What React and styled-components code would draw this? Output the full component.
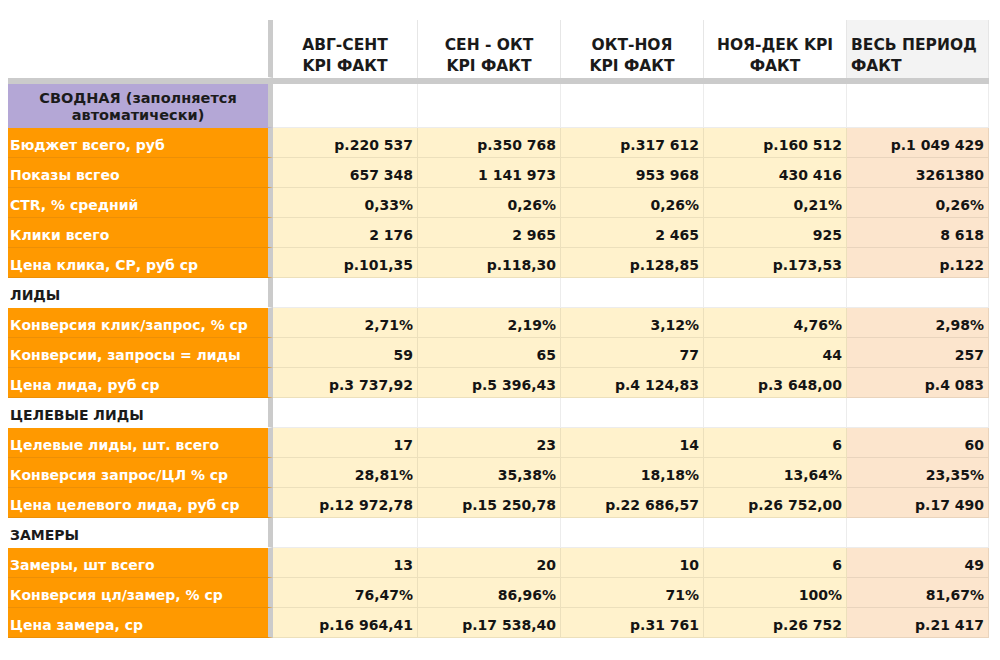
import React from 'react';
import styled, { createGlobalStyle } from 'styled-components';

const Global = createGlobalStyle`
  html, body { margin: 0; padding: 0; background: #ffffff; }
  body { font-family: "DejaVu Sans", "Liberation Sans", sans-serif; }
  * { box-sizing: border-box; }
`;

const Page = styled.div`
  padding: 20px 0 0 8px;
  width: 1000px;
  height: 660px;
  overflow: hidden;
`;

const Sheet = styled.div`
  display: flex;
  flex-direction: column;
  width: 981px;
`;

const Row = styled.div`
  display: grid;
  grid-template-columns: 265px 145px 143px 143px 143px 142px;
  height: ${p => p.$h}px;
  border-bottom: ${p => p.$rule ? '6px solid #cbcbcb' : 'none'};
`;

const LabelCell = styled.div`
  display: flex;
  align-items: center;
  justify-content: ${p => (p.$kind === 'title' ? 'center' : 'flex-start')};
  text-align: ${p => (p.$kind === 'title' ? 'center' : 'left')};
  padding: ${p => (p.$kind === 'title' ? '3px 10px 0' : '5px 2px 0')};
  border-right: 5px solid #cbcbcb;
  border-bottom: 1px solid ${p => p.$kind === 'metric' ? '#ec8f06' : 'transparent'};
  background: ${p =>
    p.$kind === 'metric' ? '#ff9900' : p.$kind === 'title' ? '#b4a7d6' : '#ffffff'};
  color: ${p => (p.$kind === 'metric' ? '#ffffff' : '#1b1b1b')};
  font-weight: 700;
  font-size: ${p => (p.$kind === 'title' ? '14.5px' : '14px')};
  line-height: ${p => (p.$kind === 'title' ? '17px' : '18px')};
  white-space: pre-line;
`;

const HeadCell = styled.div`
  display: flex;
  align-items: flex-end;
  justify-content: ${p => (p.$left ? 'flex-start' : 'center')};
  text-align: ${p => (p.$left ? 'left' : 'center')};
  padding: 0 4px 1px;
  background: ${p => (p.$shade ? '#f3f3f3' : '#ffffff')};
  border-right: 1px solid #e6e6e6;
  color: #1a1a1a;
  font-weight: 700;
  font-size: 15.5px;
  line-height: 21px;
  white-space: pre-line;
`;

const BLANK = '#ffffff';
const YELLOW = '#fff2cc';
const PEACH = '#fce5cd';

const ValueCell = styled.div`
  display: flex;
  align-items: center;
  justify-content: flex-end;
  padding: 5px 4px 0 2px;
  background: ${p => p.$bg};
  border-right: 1px solid rgba(0, 0, 0, 0.075);
  border-bottom: 1px solid rgba(0, 0, 0, 0.075);
  color: #141414;
  font-weight: 700;
  font-size: 14px;
  line-height: 18px;
  white-space: nowrap;
`;

const headers = [
  { t: 'АВГ-СЕНТ\nKPI ФАКТ' },
  { t: 'СЕН - ОКТ\nKPI ФАКТ' },
  { t: 'ОКТ-НОЯ\nKPI ФАКТ' },
  { t: 'НОЯ-ДЕК KPI\nФАКТ' },
  { t: 'ВЕСЬ ПЕРИОД\nФАКТ', left: true, shade: true },
];

const rows = [
  { label: 'Бюджет всего, руб', v: ['р.220 537', 'р.350 768', 'р.317 612', 'р.160 512', 'р.1 049 429'] },
  { label: 'Показы всгео', v: ['657 348', '1 141 973', '953 968', '430 416', '3261380'] },
  { label: 'CTR, % средний', v: ['0,33%', '0,26%', '0,26%', '0,21%', '0,26%'] },
  { label: 'Клики всего', v: ['2 176', '2 965', '2 465', '925', '8 618'] },
  { label: 'Цена клика, СР, руб ср', v: ['р.101,35', 'р.118,30', 'р.128,85', 'р.173,53', 'р.122'] },
  { section: 'ЛИДЫ' },
  { label: 'Конверсия клик/запрос, % ср', v: ['2,71%', '2,19%', '3,12%', '4,76%', '2,98%'] },
  { label: 'Конверсии, запросы = лиды', v: ['59', '65', '77', '44', '257'] },
  { label: 'Цена лида, руб  ср', v: ['р.3 737,92', 'р.5 396,43', 'р.4 124,83', 'р.3 648,00', 'р.4 083'] },
  { section: 'ЦЕЛЕВЫЕ ЛИДЫ' },
  { label: 'Целевые лиды, шт. всего', v: ['17', '23', '14', '6', '60'] },
  { label: 'Конверсия запрос/ЦЛ % ср', v: ['28,81%', '35,38%', '18,18%', '13,64%', '23,35%'] },
  { label: 'Цена целевого лида, руб  ср', v: ['р.12 972,78', 'р.15 250,78', 'р.22 686,57', 'р.26 752,00', 'р.17 490'] },
  { section: 'ЗАМЕРЫ' },
  { label: 'Замеры, шт всего', v: ['13', '20', '10', '6', '49'] },
  { label: 'Конверсия цл/замер, % ср', v: ['76,47%', '86,96%', '71%', '100%', '81,67%'] },
  { label: 'Цена замера, ср', v: ['р.16 964,41', 'р.17 538,40', 'р.31 761', 'р.26 752', 'р.21 417'] },
];

const blanks = ['', '', '', '', ''];

export default function App() {
  return (
    <Page>
      <Global />
      <Sheet>
        <Row $h={64} $rule>
          <LabelCell $kind="blank" />
          {headers.map((h, i) => (
            <HeadCell key={i} $left={h.left} $shade={h.shade}>{h.t}</HeadCell>
          ))}
        </Row>
        <Row $h={44}>
          <LabelCell $kind="title">{'СВОДНАЯ (заполняется\nавтоматически)'}</LabelCell>
          {blanks.map((_, i) => (
            <ValueCell key={i} $bg={BLANK} />
          ))}
        </Row>
        {rows.map((r, idx) =>
          r.section ? (
            <Row key={idx} $h={30}>
              <LabelCell $kind="section">{r.section}</LabelCell>
              {blanks.map((_, i) => (
                <ValueCell key={i} $bg={BLANK} />
              ))}
            </Row>
          ) : (
            <Row key={idx} $h={30}>
              <LabelCell $kind="metric">{r.label}</LabelCell>
              {r.v.map((val, i) => (
                <ValueCell key={i} $bg={i === 4 ? PEACH : YELLOW}>{val}</ValueCell>
              ))}
            </Row>
          )
        )}
      </Sheet>
    </Page>
  );
}
